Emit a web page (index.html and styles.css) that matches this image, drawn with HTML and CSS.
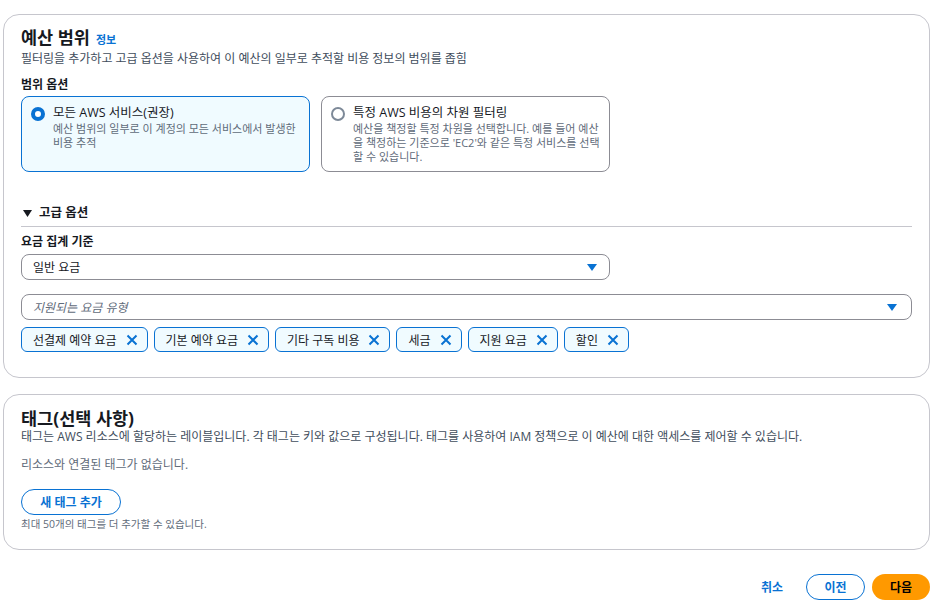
FILE: index.html
```html
<!DOCTYPE html>
<html lang="ko">
<head>
<meta charset="utf-8">
<link rel="stylesheet" href="styles.css">
</head>
<body>
<div class="page">
  <section class="card card-scope">
    <h2 class="title">예산 범위 <a class="info">정보</a></h2>
    <p class="desc">필터링을 추가하고 고급 옵션을 사용하여 이 예산의 일부로 추적할 비용 정보의 범위를 좁힘</p>
    <div class="label">범위 옵션</div>
    <div class="tiles">
      <div class="tile selected">
        <span class="radio on"></span>
        <div class="tile-text">
          <div class="tile-label">모든 AWS 서비스(권장)</div>
          <div class="tile-desc">예산 범위의 일부로 이 계정의 모든 서비스에서 발생한 비용 추적</div>
        </div>
      </div>
      <div class="tile">
        <span class="radio"></span>
        <div class="tile-text">
          <div class="tile-label">특정 AWS 비용의 차원 필터링</div>
          <div class="tile-desc breakall">예산을 책정할 특정 차원을 선택합니다. 예를 들어 예산을 책정하는 기준으로 'EC2'와 같은 특정 서비스를 선택할 수 있습니다.</div>
        </div>
      </div>
    </div>
    <div class="expand">
      <svg class="caret" width="9" height="7" viewBox="0 0 9 7"><path d="M0 0h9L4.5 7z" fill="#16191f"/></svg>
      <span>고급 옵션</span>
    </div>
    <div class="label label2">요금 집계 기준</div>
    <div class="select short">
      <span>일반 요금</span>
      <svg class="tri" width="10" height="7" viewBox="0 0 10 7"><path d="M0 0h10L5 7z" fill="#0972d3"/></svg>
    </div>
    <div class="select wide">
      <span class="placeholder">지원되는 요금 유형</span>
      <svg class="tri" width="10" height="7" viewBox="0 0 10 7"><path d="M0 0h10L5 7z" fill="#0972d3"/></svg>
    </div>
    <div class="tokens">
      <span class="token">선결제 예약 요금<svg class="x" width="12" height="12" viewBox="0 0 12 12"><path d="M1.5 1.5l9 9M10.5 1.5l-9 9" stroke="#0972d3" stroke-width="2"/></svg></span>
      <span class="token">기본 예약 요금<svg class="x" width="12" height="12" viewBox="0 0 12 12"><path d="M1.5 1.5l9 9M10.5 1.5l-9 9" stroke="#0972d3" stroke-width="2"/></svg></span>
      <span class="token">기타 구독 비용<svg class="x" width="12" height="12" viewBox="0 0 12 12"><path d="M1.5 1.5l9 9M10.5 1.5l-9 9" stroke="#0972d3" stroke-width="2"/></svg></span>
      <span class="token">세금<svg class="x" width="12" height="12" viewBox="0 0 12 12"><path d="M1.5 1.5l9 9M10.5 1.5l-9 9" stroke="#0972d3" stroke-width="2"/></svg></span>
      <span class="token">지원 요금<svg class="x" width="12" height="12" viewBox="0 0 12 12"><path d="M1.5 1.5l9 9M10.5 1.5l-9 9" stroke="#0972d3" stroke-width="2"/></svg></span>
      <span class="token">할인<svg class="x" width="12" height="12" viewBox="0 0 12 12"><path d="M1.5 1.5l9 9M10.5 1.5l-9 9" stroke="#0972d3" stroke-width="2"/></svg></span>
    </div>
  </section>

  <section class="card card-tags">
    <h2 class="title">태그(선택 사항)</h2>
    <p class="desc">태그는 AWS 리소스에 할당하는 레이블입니다. 각 태그는 키와 값으로 구성됩니다. 태그를 사용하여 IAM 정책으로 이 예산에 대한 액세스를 제어할 수 있습니다.</p>
    <p class="empty">리소스와 연결된 태그가 없습니다.</p>
    <button class="btn-outline add">새 태그 추가</button>
    <p class="hint">최대 50개의 태그를 더 추가할 수 있습니다.</p>
  </section>

  <div class="footer">
    <button class="btn-link">취소</button>
    <button class="btn-outline prev">이전</button>
    <button class="btn-primary">다음</button>
  </div>
</div>
</body>
</html>
```

FILE: styles.css
```css
* { box-sizing: border-box; }
html, body { margin: 0; padding: 0; background: #fff; }
body {
  font-family: "Open Sans", "Noto Sans CJK KR", sans-serif;
  color: #16191f;
  font-size: 12px;
}
.page {
  padding: 14px 7px 0 3px;
  width: 937px;
}
.card {
  border: 1px solid #c6c6cd;
  border-radius: 16px;
  padding: 12px 17px 0 17px;
}
.card-scope { height: 364px; }
.card-tags { margin-top: 16px; height: 156px; padding-top: 13px; }
.title {
  margin: 0;
  font-size: 17.5px;
  font-weight: 700;
  line-height: 20px;
  display: flex;
  align-items: baseline;
  gap: 6px;
}
.info {
  color: #0972d3;
  font-size: 11px;
  font-weight: 700;
}
.desc {
  margin: 1px 0 0;
  font-size: 12px;
  line-height: 16px;
  color: #414d5c;
}
.label {
  margin-top: 10px;
  font-size: 12px;
  font-weight: 700;
  line-height: 16px;
}
.tiles {
  display: flex;
  gap: 11px;
  margin-top: 3px;
}
.tile {
  width: 289px;
  height: 76px;
  border: 1px solid #8c8c94;
  border-radius: 8px;
  padding: 8px 6px 8px 9px;
  display: flex;
  gap: 8px;
}
.tile.selected {
  border-color: #0972d3;
  background: #f0fbff;
}
.radio {
  flex: none;
  width: 14px;
  height: 14px;
  margin-top: 2px;
  border-radius: 50%;
  border: 2px solid #7d8998;
  background: #fff;
}
.radio.on {
  border: 4px solid #0972d3;
}
.tile-label {
  font-size: 12.5px;
  line-height: 16px;
}
.tile-desc {
  font-size: 11px;
  line-height: 14px;
  color: #5f6b7a;
  margin-top: 1px;
}
.breakall {
  word-break: break-all;
}
.expand {
  margin-top: 33px;
  display: flex;
  align-items: center;
  gap: 7px;
  font-size: 12.5px;
  font-weight: 700;
  line-height: 16px;
  padding-left: 2px;
  padding-bottom: 5px;
  border-bottom: 1px solid #c6c6cd;
}
.label2 { margin-top: 7px; }
.select {
  margin-top: 4px;
  height: 26px;
  border: 1px solid #8c8c94;
  border-radius: 8px;
  padding: 0 12px 0 11px;
  display: flex;
  align-items: center;
  justify-content: space-between;
  font-size: 12px;
}
.select.short { width: 589px; }
.select.wide { margin-top: 14px; padding-right: 14px; }
.placeholder {
  font-style: italic;
  color: #5f6b7a;
}
.tokens {
  margin-top: 7px;
  display: flex;
  gap: 6px;
}
.token {
  height: 25px;
  border: 1px solid #0972d3;
  border-radius: 6px;
  background: #f0fbff;
  display: flex;
  align-items: center;
  gap: 9px;
  padding: 0 9px 0 11px;
  font-size: 12px;
}
.x { flex: none; }
.empty {
  margin: 12px 0 0;
  font-size: 12px;
  line-height: 16px;
  color: #5f6b7a;
}
.btn-outline {
  font-family: inherit;
  background: #fff;
  border: 1px solid #0972d3;
  border-radius: 14px;
  color: #0972d3;
  font-weight: 700;
  font-size: 12px;
  height: 26px;
  padding: 0;
  display: block;
}
.add { margin-top: 16px; width: 100px; }
.hint {
  margin: 2px 0 0;
  font-size: 10.5px;
  line-height: 14px;
  color: #5f6b7a;
}
.footer {
  margin-top: 24px;
  display: flex;
  justify-content: flex-end;
  align-items: center;
  gap: 7px;
}
.btn-link {
  font-family: inherit;
  background: none;
  border: none;
  color: #0972d3;
  font-weight: 700;
  font-size: 12px;
  margin-right: 16px;
  padding: 0;
}
.prev { width: 59px; }
.btn-primary {
  font-family: inherit;
  background: #ff9900;
  border: none;
  border-radius: 14px;
  color: #000;
  font-weight: 700;
  font-size: 12px;
  height: 26px;
  width: 58px;
  padding: 0;
}
```
